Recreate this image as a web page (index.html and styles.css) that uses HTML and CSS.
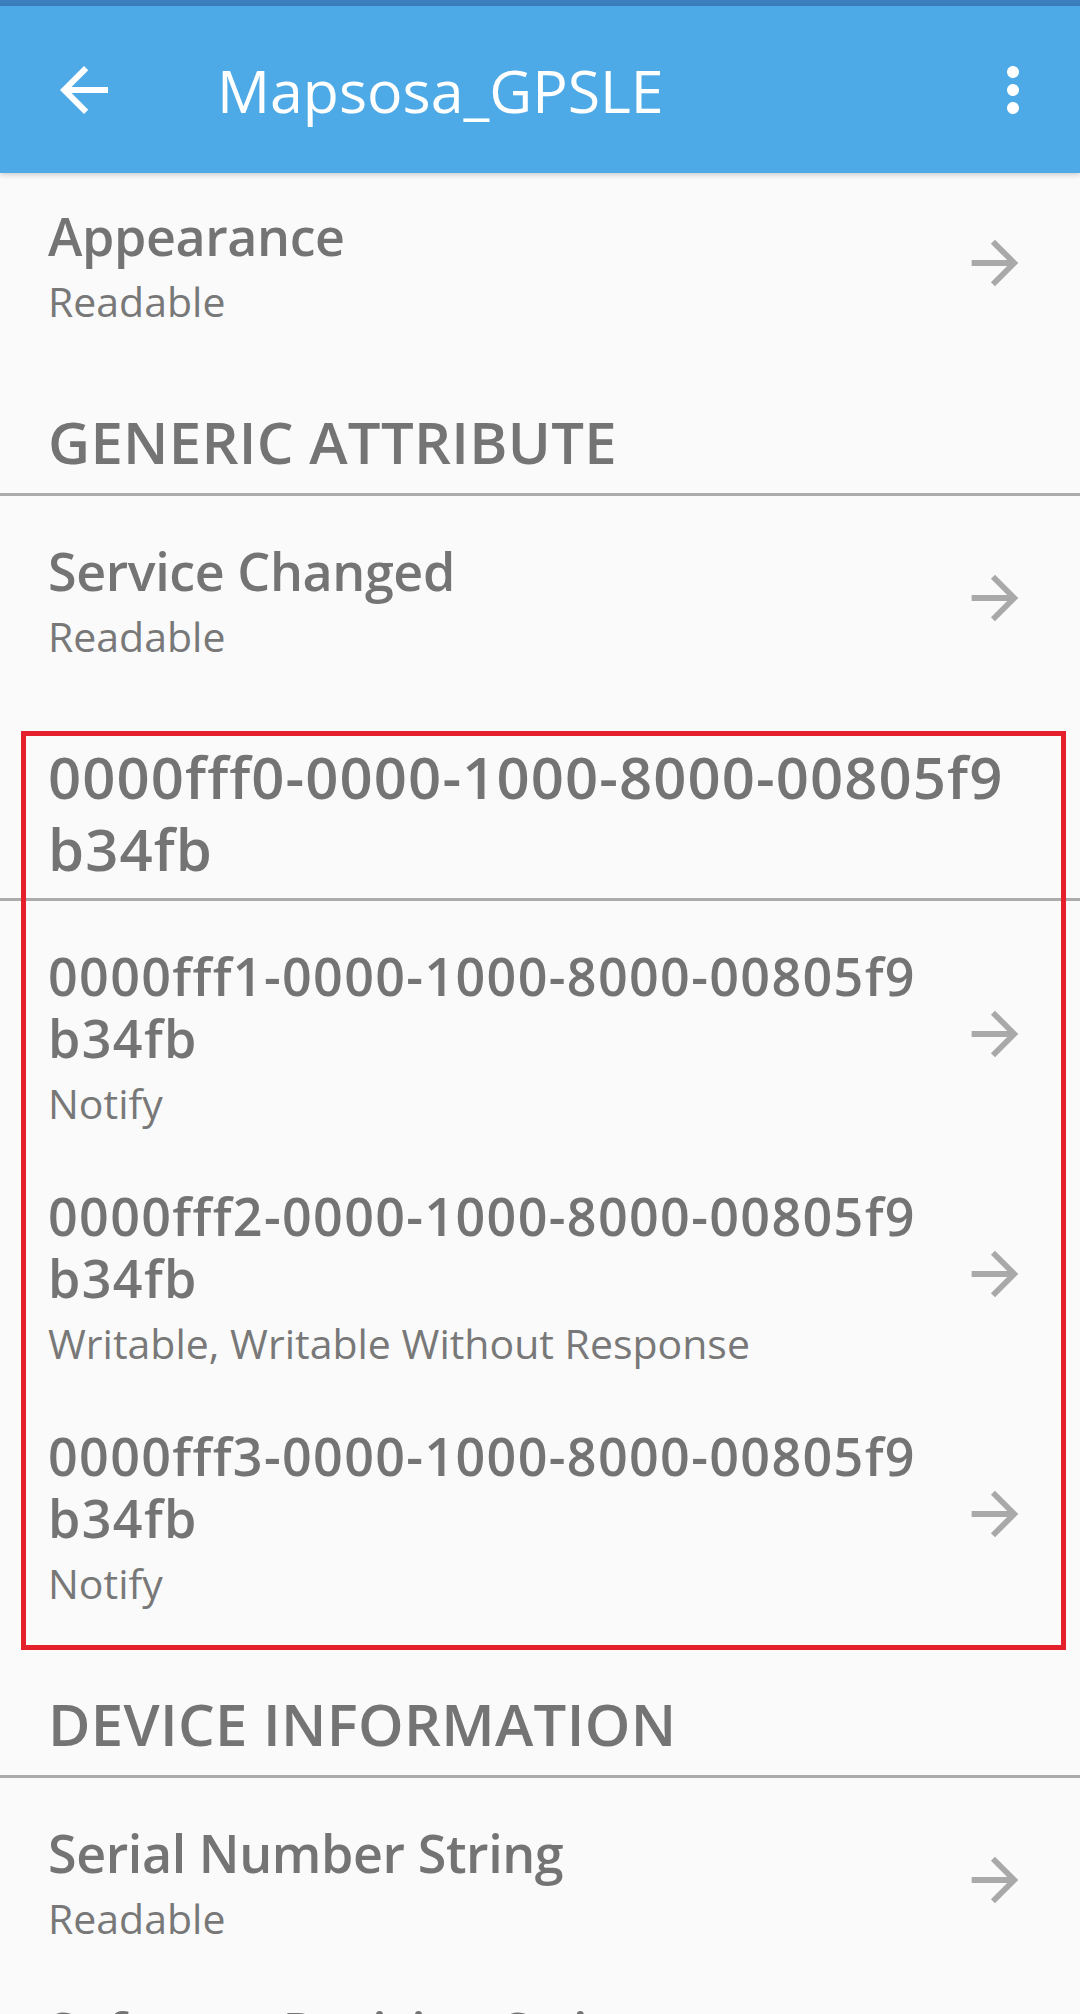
FILE: index.html
```html
<!DOCTYPE html>
<html lang="en">
<head>
<meta charset="utf-8">
<title>Mapsosa_GPSLE</title>
<link rel="stylesheet" href="styles.css">
</head>
<body>
<div class="screen">
  <div class="status-strip"></div>
  <header class="app-bar">
    <svg class="bar-icon" viewBox="0 0 24 24" width="72" height="72"><path fill="#ffffff" d="M20 11H7.83l5.59-5.59L12 4l-8 8 8 8 1.41-1.41L7.83 13H20v-2z"/></svg>
    <h1 class="app-title">Mapsosa_GPSLE</h1>
    <svg class="bar-icon menu" viewBox="0 0 24 24" width="72" height="72"><path fill="#ffffff" d="M12 8c1.1 0 2-.9 2-2s-.9-2-2-2-2 .9-2 2 .9 2 2 2zm0 2c-1.1 0-2 .9-2 2s.9 2 2 2 2-.9 2-2-.9-2-2-2zm0 6c-1.1 0-2 .9-2 2s.9 2 2 2 2-.9 2-2-.9-2-2-2z"/></svg>
  </header>

  <main class="content">
    <section class="group first">
      <div class="row">
        <div class="row-text">
          <div class="row-title">Appearance</div>
          <div class="row-sub">Readable</div>
        </div>
        <svg class="chevron" viewBox="0 0 24 24" width="70" height="70"><path d="M12 4l-1.41 1.41L16.17 11H4v2h12.17l-5.58 5.59L12 20l8-8z"/></svg>
      </div>
    </section>

    <h2 class="section-head">GENERIC ATTRIBUTE</h2>
    <section class="group">
      <div class="row">
        <div class="row-text">
          <div class="row-title">Service Changed</div>
          <div class="row-sub">Readable</div>
        </div>
        <svg class="chevron" viewBox="0 0 24 24" width="70" height="70"><path d="M12 4l-1.41 1.41L16.17 11H4v2h12.17l-5.58 5.59L12 20l8-8z"/></svg>
      </div>
    </section>

    <h2 class="section-head uuid">0000fff0-0000-1000-8000-00805f9<br>b34fb</h2>
    <section class="group">
      <div class="row">
        <div class="row-text">
          <div class="row-title uuid">0000fff1-0000-1000-8000-00805f9<br>b34fb</div>
          <div class="row-sub">Notify</div>
        </div>
        <svg class="chevron" viewBox="0 0 24 24" width="70" height="70"><path d="M12 4l-1.41 1.41L16.17 11H4v2h12.17l-5.58 5.59L12 20l8-8z"/></svg>
      </div>
      <div class="row">
        <div class="row-text">
          <div class="row-title uuid">0000fff2-0000-1000-8000-00805f9<br>b34fb</div>
          <div class="row-sub">Writable, Writable Without Response</div>
        </div>
        <svg class="chevron" viewBox="0 0 24 24" width="70" height="70"><path d="M12 4l-1.41 1.41L16.17 11H4v2h12.17l-5.58 5.59L12 20l8-8z"/></svg>
      </div>
      <div class="row">
        <div class="row-text">
          <div class="row-title uuid">0000fff3-0000-1000-8000-00805f9<br>b34fb</div>
          <div class="row-sub">Notify</div>
        </div>
        <svg class="chevron" viewBox="0 0 24 24" width="70" height="70"><path d="M12 4l-1.41 1.41L16.17 11H4v2h12.17l-5.58 5.59L12 20l8-8z"/></svg>
      </div>
    </section>

    <h2 class="section-head">DEVICE INFORMATION</h2>
    <section class="group">
      <div class="row">
        <div class="row-text">
          <div class="row-title">Serial Number String</div>
          <div class="row-sub">Readable</div>
        </div>
        <svg class="chevron" viewBox="0 0 24 24" width="70" height="70"><path d="M12 4l-1.41 1.41L16.17 11H4v2h12.17l-5.58 5.59L12 20l8-8z"/></svg>
      </div>
      <div class="row">
        <div class="row-text">
          <div class="row-title">Software Revision String</div>
          <div class="row-sub">Readable</div>
        </div>
        <svg class="chevron" viewBox="0 0 24 24" width="70" height="70"><path d="M12 4l-1.41 1.41L16.17 11H4v2h12.17l-5.58 5.59L12 20l8-8z"/></svg>
      </div>
    </section>
  </main>

  <div class="highlight-box"></div>
</div>
</body>
</html>
```

FILE: styles.css
```css
* {
  box-sizing: border-box;
}

html, body {
  margin: 0;
  padding: 0;
  background: #fafafa;
}

body {
  font-family: "Open Sans", "Noto Sans", sans-serif;
  color: #767676;
  overflow: hidden;
}

.screen {
  position: relative;
  width: 1080px;
  height: 2014px;
  overflow: hidden;
  background: #fafafa;
}

.status-strip {
  height: 6px;
  background: #3b7fbf;
}

.app-bar {
  height: 167px;
  background: #4eaae6;
  display: flex;
  align-items: center;
  padding: 0 31px 0 48px;
  box-shadow: 0 2px 5px rgba(0, 0, 0, 0.18);
  position: relative;
  z-index: 1;
}

.bar-icon {
  flex: none;
  display: block;
}

.app-title {
  flex: 1;
  margin: 0 0 0 97px;
  font-size: 59px;
  font-weight: 400;
  line-height: 72px;
  color: #ffffff;
}

.content {
  display: flex;
  flex-direction: column;
}

.group {
  display: flex;
  flex-direction: column;
  padding-top: 16px;
}

.group.first {
  padding-top: 4px;
}

.row {
  display: flex;
  align-items: center;
  padding: 28px 50px 28px 48px;
}

.row-text {
  flex: 1;
  min-width: 0;
}

.row-title {
  font-size: 52px;
  font-weight: 600;
  line-height: 62px;
  letter-spacing: -0.4px;
  color: #747474;
  white-space: nowrap;
}

.row-title.uuid {
  letter-spacing: 1.35px;
}

.row-sub {
  margin-top: 8px;
  font-size: 41px;
  font-weight: 400;
  line-height: 52px;
  color: #787878;
  white-space: nowrap;
}

.chevron {
  flex: none;
  display: block;
  fill: #a9a9a9;
  margin-bottom: 7px;
}

.section-head {
  margin: 0;
  padding: 51px 50px 15px 48px;
  font-size: 58px;
  font-weight: 600;
  line-height: 72px;
  letter-spacing: 0.3px;
  color: #747474;
  border-bottom: 3px solid #ababab;
}

.section-head.uuid {
  padding-bottom: 13px;
  letter-spacing: 1.1px;
}

.highlight-box {
  position: absolute;
  left: 21px;
  top: 731px;
  width: 1045px;
  height: 919px;
  border: 5px solid #e3202c;
  pointer-events: none;
}
```
